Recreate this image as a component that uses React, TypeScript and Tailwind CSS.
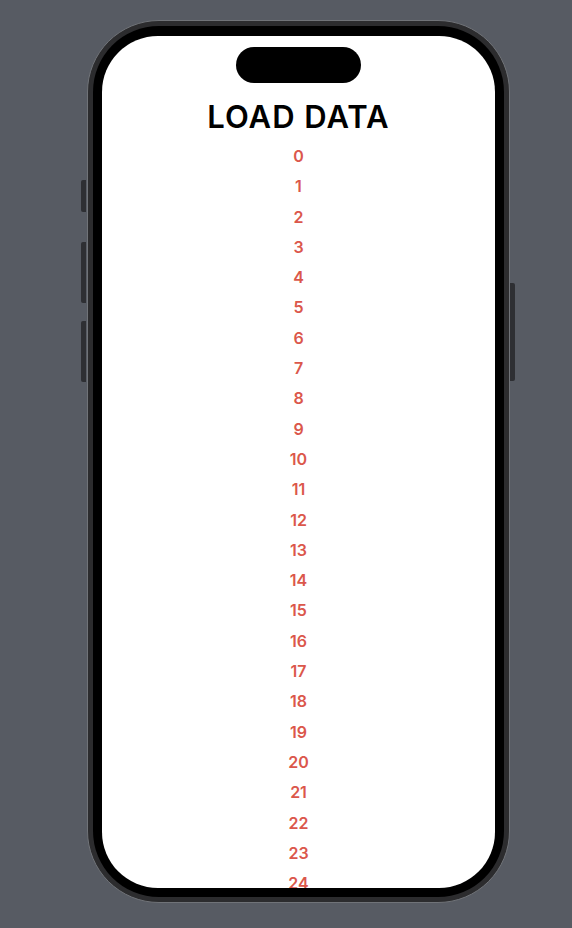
const items = Array.from({ length: 25 }, (_, i) => i);

const App = () => {
    return (
        <div className="min-h-[928px] w-full bg-[#575b63] pl-[87px] pt-[20px]" style={{ fontFamily: "Inter, 'Noto Sans', sans-serif" }}>
            {/* phone body */}
            <div className="relative w-[423px] h-[883px] rounded-[72px] bg-[#2c2c2e] border border-[#707378] p-[5px]">
                {/* side buttons */}
                <div className="absolute left-[-7px] top-[159px] w-[5px] h-[32px] rounded-l-[2px] bg-[#2e2f33]" />
                <div className="absolute left-[-7px] top-[221px] w-[5px] h-[61px] rounded-l-[2px] bg-[#2e2f33]" />
                <div className="absolute left-[-7px] top-[300px] w-[5px] h-[61px] rounded-l-[2px] bg-[#2e2f33]" />
                <div className="absolute right-[-6px] top-[262px] w-[5px] h-[98px] rounded-r-[2px] bg-[#2e2f33]" />

                {/* bezel */}
                <div className="w-full h-full rounded-[66px] bg-black pt-[10px] px-[9px] pb-[9px]">
                    {/* screen */}
                    <div className="w-full h-full rounded-[56px] bg-white overflow-hidden flex flex-col items-center">
                        <div className="mt-[11px] w-[125px] h-[36px] rounded-full bg-black shrink-0" />
                        <h1 className="mt-[16px] text-[31px] leading-[36px] font-semibold text-black tracking-[1px]">
                            LOAD DATA
                        </h1>
                        <div className="mt-[6px] flex flex-col items-center">
                            {items.map((n) => (
                                <p key={n} className="text-[16px] leading-[30.3px] font-semibold text-[#db574b]">
                                    {n}
                                </p>
                            ))}
                        </div>
                    </div>
                </div>
            </div>
        </div>
    );
};

export default App;
